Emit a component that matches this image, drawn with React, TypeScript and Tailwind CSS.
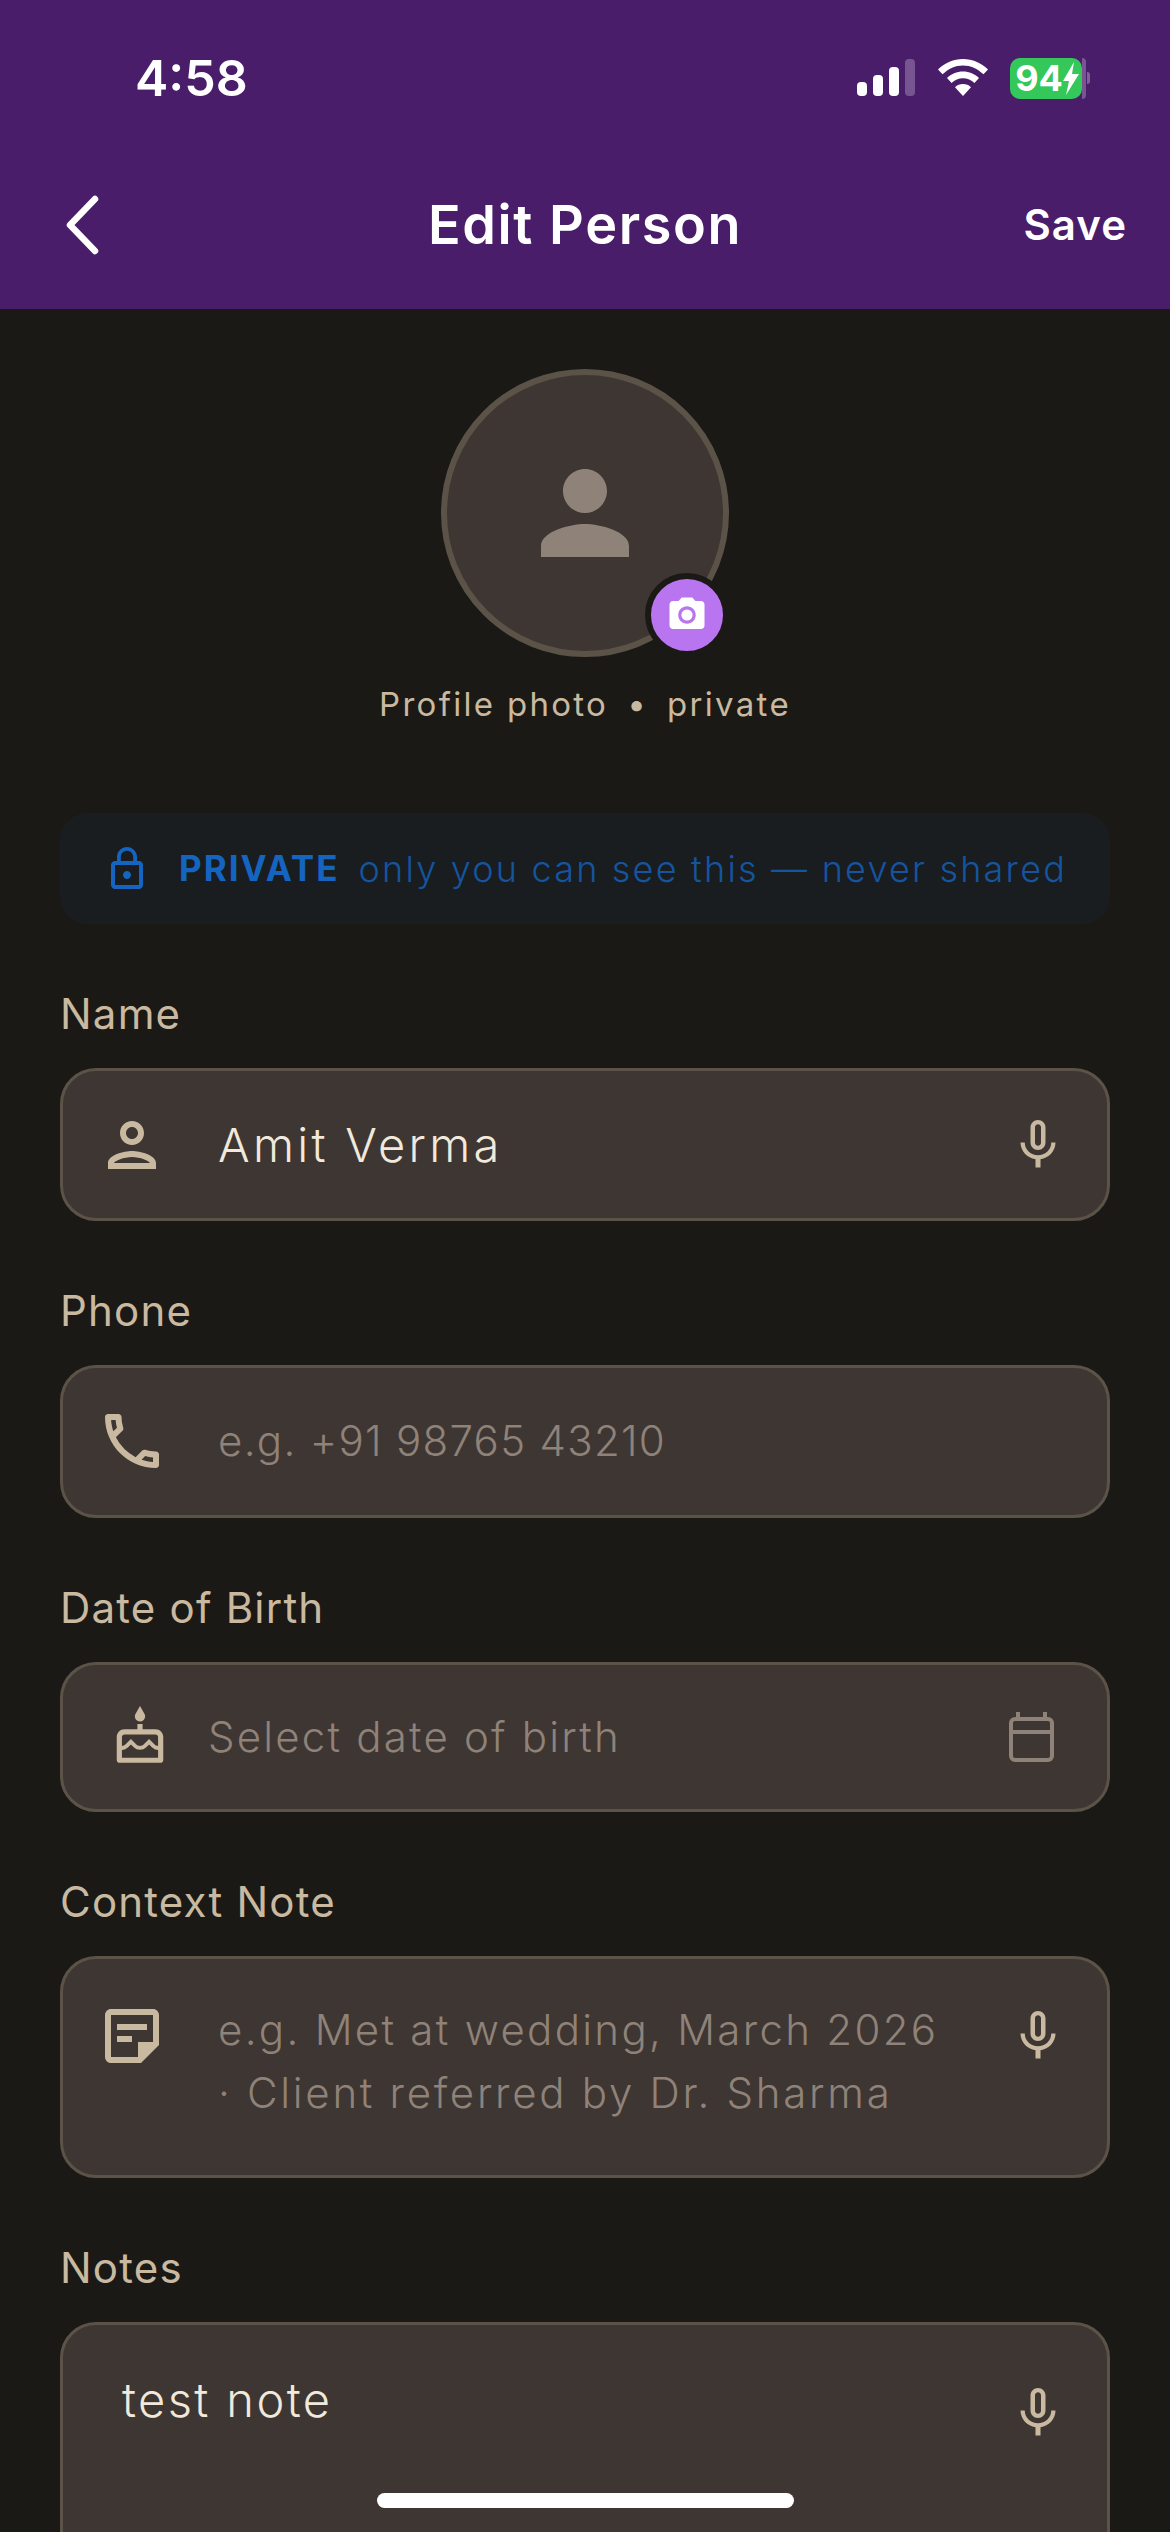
import {
  MdCameraAlt,
  MdLockOutline,
  MdMicNone,
  MdOutlineCake,
  MdOutlineCall,
  MdOutlinePerson,
  MdOutlineStickyNote2,
  MdPerson,
} from "react-icons/md";

function StatusBar() {
  return (
    <div className="flex h-[156px] items-center pl-[135px] pr-[80px] pt-[0px]">
      <span className="text-[50px] font-semibold leading-none text-white">4:58</span>
      <div className="ml-auto flex items-center">
        <svg width="58" height="38" viewBox="0 0 58 38" fill="white">
          <rect x="0" y="23" width="10" height="14" rx="4" />
          <rect x="16" y="16" width="10" height="21" rx="4" />
          <rect x="32" y="8" width="10" height="29" rx="4" />
          <rect x="48" y="0" width="10" height="37" rx="4" fillOpacity="0.25" />
        </svg>
        <svg className="ml-[23px]" width="50" height="38" viewBox="0 0 50 38" fill="white">
          <path d="M25 0C15.500 0 7 3.800 0 10.500l4.500 4.800C10.500 9.600 17.400 6.400 25 6.400s14.500 3.200 20.500 8.900l4.500-4.800C43 3.800 34.500 0 25 0z" />
          <path d="M25 12.500c-6.200 0-11.800 2.500-16 6.500l4.600 4.900c3-2.900 7-4.700 11.400-4.700s8.400 1.800 11.400 4.700L41 19c-4.200-4-9.800-6.500-16-6.500z" />
          <path d="M25 25c-3.100 0-5.900 1.200-8 3.200L25 37l8-8.800C30.900 26.200 28.100 25 25 25z" />
        </svg>
        <div className="ml-[22px] flex items-center">
          <div className="flex h-[41px] w-[72px] items-center justify-center rounded-[10px] bg-[#34c759] pl-[2px]">
            <span className="text-[36px] font-bold leading-none text-white">94</span>
            <svg width="16" height="33" viewBox="0 0 16 33" fill="white">
              <path d="M11 0 0 19h6l-3 14L16 12H9z" />
            </svg>
          </div>
          <div className="h-[41px] w-[4px] rounded-r-[4px] bg-white/25" />
          <div className="ml-[1px] h-[12px] w-[3px] rounded-r-full bg-white/30" />
        </div>
      </div>
    </div>
  );
}

function NavBar() {
  return (
    <div className="relative flex h-[153px] items-center justify-between pb-[16px] pl-[62px] pr-[43px]">
      <svg width="42" height="60" viewBox="0 0 42 60" fill="none">
        <path d="M33 4 8 30l25 26" stroke="white" strokeWidth="6.500" strokeLinecap="round" strokeLinejoin="round" />
      </svg>
      <span className="absolute left-0 right-0 top-[31px] text-center text-[54px] font-semibold leading-[76px] tracking-[1.6px] text-white">
        Edit Person
      </span>
      <span className="text-[42px] font-semibold leading-none tracking-[1px] text-white">Save</span>
    </div>
  );
}

function Avatar() {
  return (
    <div className="flex flex-col items-center pt-[60px]">
      <div className="relative flex size-[288px] items-center justify-center rounded-full border-[6px] border-[#5c5348] bg-[#3e3632]">
        <MdPerson size={132} color="#8f8279" />
        <div className="absolute left-[198px] top-[198px] flex size-[84px] items-center justify-center rounded-full border-[6px] border-[#1a1915] bg-[#b975f0]">
          <MdCameraAlt size={42} color="white" />
        </div>
      </div>
      <div className="mt-[24px] flex h-[48px] items-center text-[33px] tracking-[2.3px] text-[#c9b9a0]">
        <span>Profile photo</span>
        <span className="mx-[19px]">•</span>
        <span>private</span>
      </div>
    </div>
  );
}

function Banner() {
  return (
    <div className="mt-[84px] flex h-[111px] items-center rounded-[27px] bg-[#191d20] pl-[43px]">
      <MdLockOutline size={48} color="#1565c0" />
      <span className="ml-[28px] text-[35px] font-bold leading-none tracking-[2px] text-[#1565c0]">PRIVATE</span>
      <span className="ml-[19px] text-[36px] font-light leading-none tracking-[2.2px] text-[#15549f]">
        only you can see this — never shared
      </span>
    </div>
  );
}

function FieldLabel({ children }: { children: string }) {
  return (
    <div className="mb-[24px] flex h-[60px] items-center text-[42px] leading-none tracking-[1.200px] text-[#c9b9a0]">
      {children}
    </div>
  );
}

function CalendarIcon() {
  return (
    <svg width="45" height="50" viewBox="0 0 45 50" fill="none" stroke="#8f8279" strokeWidth="4">
      <rect x="2" y="7" width="41" height="41" rx="4" />
      <path d="M2 20h41M9 0v7M36 0v7" />
    </svg>
  );
}

export default function App() {
  return (
    <div className="relative h-[2532px] w-[1170px] overflow-hidden bg-[#1a1915] font-[Inter,sans-serif]">
      <div className="bg-[#4a1d6b]">
        <StatusBar />
        <NavBar />
      </div>

      <div className="px-[60px]">
        <Avatar />
        <Banner />

        <div className="mt-[60px] flex flex-col gap-[60px]">
          <div>
            <FieldLabel>Name</FieldLabel>
            <div className="flex h-[153px] items-center rounded-[36px] border-[3px] border-[#5c5348] bg-[#3e3632] pl-[33px] pr-[39px]">
              <MdOutlinePerson size={72} color="#c9b9a0" />
              <span className="ml-[50px] text-[47px] font-light leading-none tracking-[3.300px] text-[#f0e9dc]">
                Amit Verma
              </span>
              <MdMicNone className="ml-auto" size={60} color="#c9b9a0" />
            </div>
          </div>

          <div>
            <FieldLabel>Phone</FieldLabel>
            <div className="flex h-[153px] items-center rounded-[36px] border-[3px] border-[#5c5348] bg-[#3e3632] pb-[2px] pl-[33px]">
              <MdOutlineCall size={72} color="#c9b9a0" />
              <span className="ml-[50px] text-[42px] font-light leading-none tracking-[1.3px] text-[#8f8279]">
                e.g. +91 98765 43210
              </span>
            </div>
          </div>

          <div>
            <FieldLabel>Date of Birth</FieldLabel>
            <div className="flex h-[150px] items-center rounded-[36px] border-[3px] border-[#5c5348] bg-[#3e3632] pl-[46px] pr-[53px]">
              <MdOutlineCake size={62} color="#c9b9a0" />
              <span className="ml-[37px] text-[42px] font-light leading-none tracking-[2.2px] text-[#8f8279]">
                Select date of birth
              </span>
              <div className="ml-auto flex">
                <CalendarIcon />
              </div>
            </div>
          </div>

          <div>
            <FieldLabel>Context Note</FieldLabel>
            <div className="flex h-[222px] items-start rounded-[36px] border-[3px] border-[#5c5348] bg-[#3e3632] pl-[33px] pr-[39px]">
              <MdOutlineStickyNote2 className="mt-[41px] shrink-0" size={72} color="#c9b9a0" />
              <div className="ml-[50px] mt-[39px] text-[42px] font-light leading-[63px] tracking-[2.3px] text-[#8f8279]">
                <div>e.g. Met at wedding, March 2026</div>
                <div className="tracking-[2.7px]">· Client referred by Dr. Sharma</div>
              </div>
              <MdMicNone className="ml-auto mt-[47px] shrink-0" size={60} color="#c9b9a0" />
            </div>
          </div>

          <div>
            <FieldLabel>Notes</FieldLabel>
            <div className="flex h-[320px] items-start rounded-[36px] border-[3px] border-[#5c5348] bg-[#3e3632] pl-[59px] pr-[39px]">
              <span className="mt-[43px] text-[47px] font-light leading-[63px] tracking-[2.4px] text-[#f0e9dc]">
                test note
              </span>
              <MdMicNone className="ml-auto mt-[58px] shrink-0" size={60} color="#c9b9a0" />
            </div>
          </div>
        </div>
      </div>

      <div className="absolute bottom-[24px] left-[377px] h-[15px] w-[417px] rounded-full bg-white" />
    </div>
  );
}
